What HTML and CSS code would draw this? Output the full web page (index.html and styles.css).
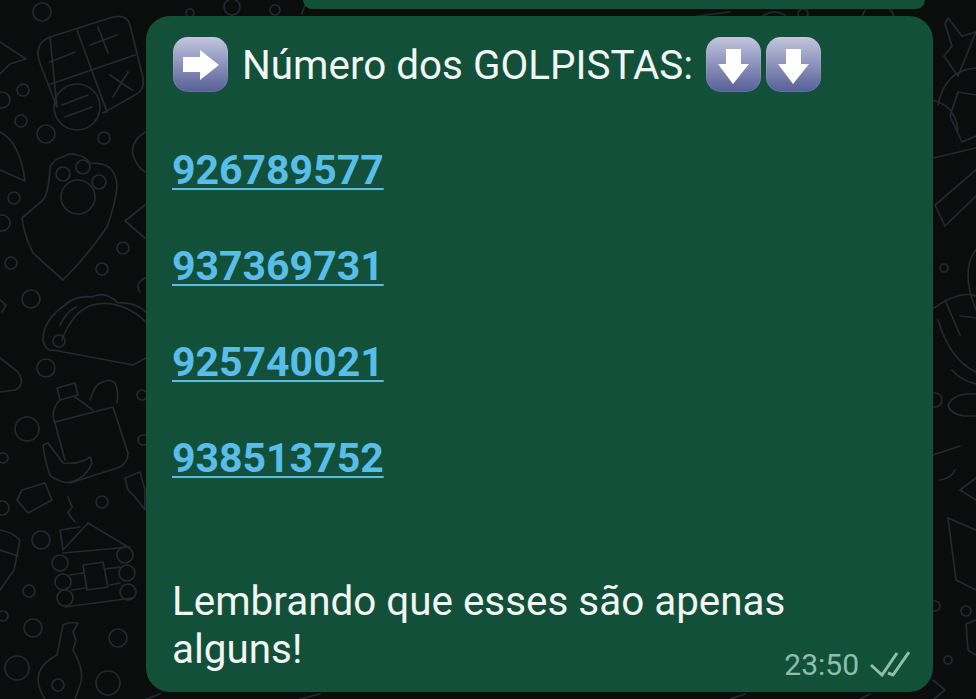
FILE: index.html
```html
<!DOCTYPE html>
<html lang="pt">
<head>
<meta charset="utf-8">
<title>Conversa</title>
<link rel="stylesheet" href="styles.css">
</head>
<body>
<main class="chat">
  <svg class="doodles" viewBox="0 0 976 699" aria-hidden="true">
    <g class="d">
      <!-- calculator -->
      <path d="M50 37 L113 17 Q127 14 130 25 L143 78 Q145 90 135 95 L103 113 M57 107 L41 66 Q32 44 50 37Z"/>
      <path d="M77 30 L107 112 M48 85 L135 55 M50 62 L75 52 M90 45 L117 35 M98 27 L108 53 M113 97 L128 72 M110 75 L132 90"/>
      <circle cx="77" cy="107" r="23"/><path d="M62 105 L88 95 M65 117 L92 107"/>
      <!-- paw -->
      <path d="M22 218 L43 200 Q49 192 50 167 Q55 158 63 157 Q70 152 77 155 Q85 156 90 163 Q105 163 110 168 Q117 175 117 187 Q115 205 107 227 Q88 255 63 280 L33 253 Q24 235 22 218Z"/>
      <circle cx="63" cy="174" r="7"/><circle cx="83" cy="167" r="7"/><circle cx="99" cy="182" r="7"/><circle cx="78" cy="197" r="17"/>
      <!-- left edge -->
      <path d="M0 42 L26 59 L10 64 L0 74 M0 132 Q20 142 25 181 L0 170 M0 300 L6 305 L2 312"/>
      <path d="M145 132 Q130 142 133 155 Q137 167 145 172 M145 205 L125 221 L145 238 M145 278 Q134 284 140 292"/>
      <!-- taco -->
      <path d="M146 312 Q135 302 118 303 Q105 290 92 297 Q76 295 65 305 Q43 320 43 340 Q46 352 53 350 L133 365 L146 358 M146 322 Q120 298 92 305 Q72 312 62 340 M60 325 Q66 312 76 307"/>
      <circle cx="59" cy="341" r="6"/>
      <path d="M0 358 L18 372 Q26 385 15 390 L0 392"/>
      <!-- bottle + banana -->
      <path d="M57 388 L75 383 L78 395 L60 400Z M60 400 Q50 410 55 423 L65 460 M55 422 L113 407 L128 453 Q128 462 120 467 L70 483 M75 397 L93 410 M90 400 Q95 385 100 383 Q110 378 115 383 Q119 392 117 403"/>
      <path d="M43 445 L48 443 L63 463 Q78 465 90 457 L92 463 Q88 473 80 478 Q70 484 63 482 Q52 478 50 475 Q45 462 43 445Z"/>
      <!-- block + squiggle -->
      <path d="M22 490 L45 483 L52 500 L28 513 L17 500Z M68 497 L72 507 L68 513 L75 522"/>
      <path d="M125 478 L140 472 L145 490 L145 510 L135 497 L128 490Z"/>
      <!-- cabin -->
      <path d="M88 523 L128 547 M88 523 L63 550 M60 530 L80 527 M60 530 L63 550 M63 553 L130 547 M83 565 L103 562 L108 587 L87 590Z M65 607 L133 598 M70 575 L83 573 M105 569 L120 567 M72 590 L85 588 M110 585 L120 583"/>
      <circle cx="60" cy="563" r="8"/><circle cx="63" cy="582" r="8"/><circle cx="65" cy="598" r="8"/><circle cx="125" cy="555" r="8"/><circle cx="127" cy="573" r="8"/><circle cx="128" cy="592" r="8"/>
      <path d="M0 530 Q12 532 20 540 L14 570 L0 590 M0 550 L18 556"/>
      <!-- key -->
      <path d="M57 655 L63 625 Q68 622 78 623 L73 632 L76 640 L73 650 L78 660 Q84 675 80 685 L75 699 M57 655 Q38 665 38 680 Q39 690 45 699"/>
      <circle cx="58" cy="685" r="6"/>
      <!-- small circles left -->
      <circle cx="42" cy="12" r="9"/><circle cx="23" cy="90" r="6"/><circle cx="2" cy="100" r="8"/><circle cx="21" cy="121" r="6"/><circle cx="46" cy="134" r="9"/><circle cx="104" cy="138" r="6"/><circle cx="14" cy="198" r="6"/><circle cx="2" cy="223" r="8"/><circle cx="123" cy="248" r="6"/><circle cx="11" cy="263" r="6"/><circle cx="102" cy="269" r="6"/><circle cx="31" cy="299" r="9"/>
      <circle cx="46" cy="368" r="9"/><circle cx="27" cy="429" r="12"/><circle cx="3" cy="458" r="5"/><circle cx="2" cy="508" r="7"/><circle cx="102" cy="502" r="6"/><circle cx="41" cy="540" r="9"/><circle cx="29" cy="591" r="6"/><circle cx="3" cy="616" r="5"/><circle cx="33" cy="628" r="9"/><circle cx="118" cy="638" r="9"/><circle cx="17" cy="668" r="12"/><circle cx="108" cy="683" r="12"/><circle cx="142" cy="395" r="5"/><circle cx="143" cy="440" r="5"/>
      <!-- strip at top -->
      <circle cx="232" cy="7" r="8"/><circle cx="275" cy="10" r="5"/><circle cx="190" cy="13" r="4"/><circle cx="803" cy="14" r="5"/><circle cx="878" cy="20" r="16"/>
      <path d="M697 16 L730 12 M302 14 L306 2 M760 18 Q772 8 785 15"/>
      <!-- right edge -->
      <path d="M945 24 L948 18 L962 36 L976 32 L958 76 L944 56 L952 46Z M938 105 Q945 70 976 68 M976 95 L958 92 L950 116 L962 142 L976 136 M932 100 Q955 105 958 130 M933 158 L976 148"/>
      <path d="M935 205 L976 170 M945 226 L976 196 M935 205 L945 226 M976 310 Q960 270 976 250"/>
      <circle cx="944" cy="268" r="4"/>
      <path d="M934 308 Q960 290 976 296 M945 300 L960 335 M952 370 Q960 380 976 384 M938 320 Q950 360 976 372 M960 316 L976 318"/>
      <path d="M976 394 Q955 392 948 405 Q950 414 965 416 L976 416 M933 455 L960 446 M940 480 Q952 478 955 470"/>
      <path d="M976 478 L960 490 L976 500 M948 518 L976 530 M948 518 L956 580 L976 590"/>
      <path d="M976 620 L966 624 L968 650 L976 655"/>
      <circle cx="966" cy="611" r="5"/><circle cx="948" cy="660" r="4"/><circle cx="935" cy="606" r="5"/><circle cx="935" cy="400" r="7"/>
      <path d="M933 680 L945 690 L934 699"/>
      <!-- strip at bottom -->
      <path d="M146 699 L160 694 M300 699 L320 694 M860 699 L870 694 M730 699 L745 694"/>
    </g>
  </svg>

  <div class="prev-bubble"></div>

  <article class="bubble">
    <header class="headline">
      <span class="emoji">
        <svg viewBox="0 0 55 55"><path d="M10 20H27V13L46 28L27 43V35H10Z"/></svg>
      </span>
      <span class="headline-text">Número dos GOLPISTAS:</span>
      <span class="emoji">
        <svg viewBox="0 0 55 55"><path d="M20 12H35V27H43L27 47L12 27H20Z"/></svg>
      </span>
      <span class="emoji">
        <svg viewBox="0 0 55 55"><path d="M20 12H35V27H43L27 47L12 27H20Z"/></svg>
      </span>
    </header>

    <ul class="numbers">
      <li><a href="#">926789577</a></li>
      <li><a href="#">937369731</a></li>
      <li><a href="#">925740021</a></li>
      <li><a href="#">938513752</a></li>
    </ul>

    <p class="note">Lembrando que esses são apenas</p>
    <footer class="last-row">
      <span class="note">alguns!</span>
      <span class="meta">
        <time>23:50</time>
        <svg class="ticks" viewBox="0 0 40 30"><path d="M1 15L12 25L27 3M18 23L23 25L39 2"/></svg>
      </span>
    </footer>
  </article>
</main>
</body>
</html>
```
FILE: styles.css
```css
* { box-sizing: border-box; }

html, body {
  margin: 0;
  padding: 0;
  background: #0a0d0c;
}

.chat {
  position: relative;
  width: 976px;
  height: 699px;
  overflow: hidden;
  display: flex;
  flex-direction: column;
  font-family: Roboto, "Liberation Sans", sans-serif;
  color: #f1f6f3;
  background: #0a0d0c;
}

.doodles {
  position: absolute;
  inset: 0;
  width: 976px;
  height: 699px;
}

.d {
  fill: none;
  stroke: #25292e;
  stroke-width: 1.7;
  stroke-linejoin: round;
  stroke-linecap: round;
}

.prev-bubble {
  position: relative;
  flex: none;
  height: 9px;
  margin-left: 303px;
  width: 622px;
  background: #13503a;
  border-radius: 0 0 20px 20px;
}

.bubble {
  position: relative;
  flex: none;
  width: 787px;
  height: 676px;
  margin: 7px 0 0 146px;
  padding: 21px 26px 0 27px;
  background: #13503a;
  border-radius: 24px;
}

.headline {
  display: flex;
  align-items: center;
  height: 55px;
}

.headline-text {
  margin: 0 13px 0 9px;
  font-size: 40.4px;
  white-space: nowrap;
  position: relative;
  top: 1px;
}

.emoji {
  flex: none;
  width: 55px;
  height: 55px;
  margin-right: 5px;
  border-radius: 15px;
  background: linear-gradient(#c2c6de 0%, #9197be 45%, #565f97 100%);
  box-shadow: inset 0 0 0 1px rgba(205, 210, 230, .15);
}

.emoji svg {
  display: block;
  width: 55px;
  height: 55px;
  fill: #fff;
}

.numbers {
  list-style: none;
  margin: 54px 0 0;
  padding: 0;
  display: flex;
  flex-direction: column;
  gap: 48px;
}

.numbers li {
  height: 48px;
  line-height: 48px;
  font-size: 41px;
  font-weight: 700;
  margin-left: -1px;
}

.numbers a {
  color: #58bde9;
  text-decoration: underline;
  text-decoration-thickness: 2px;
  text-underline-offset: 4px;
}

.note {
  margin: 0;
  font-size: 40.4px;
  line-height: 48px;
  margin-left: -1px;
}

p.note {
  margin-top: 96px;
}

.last-row {
  display: flex;
  justify-content: space-between;
  align-items: flex-end;
}

.meta {
  display: flex;
  align-items: center;
  gap: 11px;
  margin-right: -3px;
  margin-bottom: -9px;
  font-size: 30px;
  line-height: 36px;
  color: #8dbfab;
}

.ticks {
  width: 40px;
  height: 30px;
  fill: none;
  stroke: #8dbfab;
  stroke-width: 3;
}
```
